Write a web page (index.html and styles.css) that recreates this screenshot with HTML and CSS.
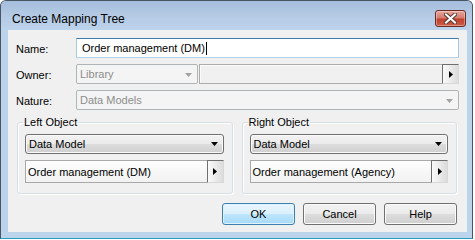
FILE: index.html
```html
<!DOCTYPE html>
<html lang="en">
<head>
  <meta charset="UTF-8">
  <title>Create Mapping Tree</title>
  <link rel="stylesheet" href="styles.css">
</head>
<body>
<!-- dialog window -->
<div class="window">
  <div class="titlebar">
    <span class="title">Create Mapping Tree</span>
    <div class="closeBtn">
      <svg width="13" height="11" viewBox="0 0 13 11">
        <path d="M2 1.5 L11 9.5 M11 1.5 L2 9.5" stroke="#5b3a36" stroke-width="4" stroke-linecap="square" fill="none"/>
        <path d="M2 1.5 L11 9.5 M11 1.5 L2 9.5" stroke="#fff" stroke-width="2" stroke-linecap="square" fill="none"/>
      </svg>
    </div>
  </div>

  <div class="client">
    <!-- general fields -->
    <div class="row">
      <span class="lbl">Name:</span>
      <div class="textbox">Order management (DM)<span class="caret"></span></div>
    </div>
    <div class="row">
      <span class="lbl">Owner:</span>
      <div class="ownerWrap">
        <div class="combo ownerCombo">
          <span>Library</span>
          <svg class="arrowDown" width="7" height="4"><polygon points="0,0 7,0 3.5,4" fill="#a2a2a2"/></svg>
        </div>
        <div class="picker ownerPicker">
          <span class="pickerText"></span>
          <span class="pickerBtn"><svg width="4" height="7"><polygon points="0,0 4,3.5 0,7" fill="#000"/></svg></span>
        </div>
      </div>
    </div>
    <div class="row">
      <span class="lbl">Nature:</span>
      <div class="combo">
        <span>Data Models</span>
        <svg class="arrowDown" width="7" height="4"><polygon points="0,0 7,0 3.5,4" fill="#a2a2a2"/></svg>
      </div>
    </div>

    <!-- objects -->
    <div class="groups">
      <fieldset class="group">
        <legend>Left Object</legend>
        <div class="dropdown">
          <span>Data Model</span>
          <svg width="7" height="4"><polygon points="0,0 7,0 3.5,4" fill="#000"/></svg>
        </div>
        <div class="picker objPicker">
          <span class="pickerText">Order management (DM)</span>
          <span class="pickerBtn"><svg width="4" height="7"><polygon points="0,0 4,3.5 0,7" fill="#000"/></svg></span>
        </div>
      </fieldset>
      <fieldset class="group">
        <legend>Right Object</legend>
        <div class="dropdown">
          <span>Data Model</span>
          <svg width="7" height="4"><polygon points="0,0 7,0 3.5,4" fill="#000"/></svg>
        </div>
        <div class="picker objPicker">
          <span class="pickerText">Order management (Agency)</span>
          <span class="pickerBtn"><svg width="4" height="7"><polygon points="0,0 4,3.5 0,7" fill="#000"/></svg></span>
        </div>
      </fieldset>
    </div>

    <div class="buttons">
      <div class="btn btnDefault">OK</div>
      <div class="btn">Cancel</div>
      <div class="btn">Help</div>
    </div>
  </div>
</div>
</body>
</html>
```

FILE: styles.css
```css
:root {
  --frame: #bcd3ec;
  --face: #f0f0f0;
  --text: #000;
  --grayText: #8d8d8d;
}
* {
  box-sizing: border-box;
  font-family: 'Liberation Sans', Arial, sans-serif;
}
html, body {
  margin: 0;
  background: #fff;
}
.window {
  width: 473px;
  height: 239px;
  display: flex;
  flex-direction: column;
  background: var(--frame);
  border: 1px solid #4a5563;
  border-bottom-color: #2a9cc0;
  border-radius: 6px 6px 0 0;
  box-shadow: 0 1px 0 #1c1c1c;
}
.titlebar {
  height: 29px;
  flex: none;
  display: flex;
  align-items: center;
  justify-content: space-between;
  padding: 6px 6px 0 11px;
  border-radius: 5px 5px 0 0;
  background: linear-gradient(#a5bedc, #b7cce6 60%, #bcd3ec);
}
.title {
  font-size: 12px;
  color: #000;
}
.closeBtn {
  width: 31px;
  height: 17px;
  display: flex;
  align-items: center;
  justify-content: center;
  border: 1px solid #6b2a22;
  border-radius: 3px;
  background: linear-gradient(#e8a89c, #d47d6e 45%, #c0412f 55%, #cc5d45);
  box-shadow: inset 0 0 0 1px rgba(255,255,255,0.35);
}
.client {
  flex: 1;
  margin: 0 5px 6px 7px;
  background: var(--face);
  padding: 8px 8px 7px 8px;
  font-size: 11px;
  color: var(--text);
}
.row {
  display: grid;
  grid-template-columns: 60px 1fr;
  align-items: center;
  height: 20px;
  margin-bottom: 6px;
}
.row:nth-child(3) {
  margin-bottom: 0;
}
.lbl {
  padding-top: 2px;
}
.textbox {
  height: 20px;
  display: flex;
  align-items: center;
  padding-left: 5px;
  background: #fff;
  border: 1px solid #b5cfe7;
  border-top-color: #3d7bad;
  border-left-color: #a4c9e3;
  border-right-color: #a4c9e3;
}
.caret {
  width: 1px;
  height: 13px;
  margin-left: 1px;
  background: #000;
}
.ownerWrap {
  display: flex;
  gap: 1px;
  height: 20px;
}
.combo {
  height: 20px;
  display: flex;
  align-items: center;
  justify-content: space-between;
  padding: 0 5px 0 3px;
  background: #f4f4f4;
  border: 1px solid #afb4b7;
  border-radius: 2px;
  color: var(--grayText);
}
.ownerCombo {
  width: 122px;
  flex: none;
}
.arrowDown {
  margin-top: 1px;
}
.picker {
  display: flex;
  align-items: stretch;
  border: 1px solid #a9a9a9;
  background: #f7f7f7;
}
.ownerPicker {
  flex: 1;
  height: 20px;
  border-color: #acacac;
  background: #f0f0f0;
  box-shadow: inset 1px 1px 0 #fbfbfb;
}
.pickerText {
  flex: 1;
  display: flex;
  align-items: center;
  padding-left: 2px;
}
.pickerBtn {
  width: 17px;
  flex: none;
  display: flex;
  align-items: center;
  justify-content: center;
  border: 1px solid #6f6f6f;
  border-right-color: #d8d8d8;
  border-bottom-color: #d8d8d8;
  margin: -1px -1px -1px 0;
  background: linear-gradient(90deg, #fafafa, #dcdcdc);
}
.groups {
  display: grid;
  grid-template-columns: 1fr 1fr;
  gap: 9px;
  margin: 6px 2px 0 1px;
}
.group {
  margin: 0;
  min-width: 0;
  height: 78px;
  padding: 5px 8px 10px 7px;
  border: 1px solid #d5dfe5;
  border-radius: 3px;
  box-shadow: 1px 1px 0 #fff, inset 1px 1px 0 #fff;
}
.group legend {
  padding: 0 1px;
  margin-left: -2px;
  line-height: 13px;
  font-size: 11px;
}
.dropdown {
  height: 20px;
  display: flex;
  align-items: center;
  justify-content: space-between;
  padding: 0 5px 0 3px;
  border: 1px solid #707070;
  border-radius: 3px;
  background: linear-gradient(#f2f2f2, #ebebeb 50%, #dddddd 51%, #cfcfcf);
  box-shadow: inset 0 0 0 1px #fafafa;
  margin-bottom: 6px;
}
.objPicker {
  height: 23px;
  background: linear-gradient(#fdfdfd, #f2f2f2);
}
.buttons {
  display: flex;
  justify-content: flex-end;
  gap: 8px;
  margin: 9px 2px 0 0;
}
.btn {
  width: 73px;
  height: 22px;
  display: flex;
  align-items: center;
  justify-content: center;
  border: 1px solid #707070;
  border-radius: 3px;
  background: linear-gradient(#f2f2f2, #ebebeb 50%, #dddddd 51%, #cfcfcf);
  box-shadow: inset 0 0 0 1px #fbfbfb;
}
.btnDefault {
  border-color: #3c7fb1;
  background: linear-gradient(#eaf6fd, #d9f0fc 50%, #bee6fd 51%, #a7d9f5);
  box-shadow: inset 0 0 0 1px #dff2fc;
}
```
